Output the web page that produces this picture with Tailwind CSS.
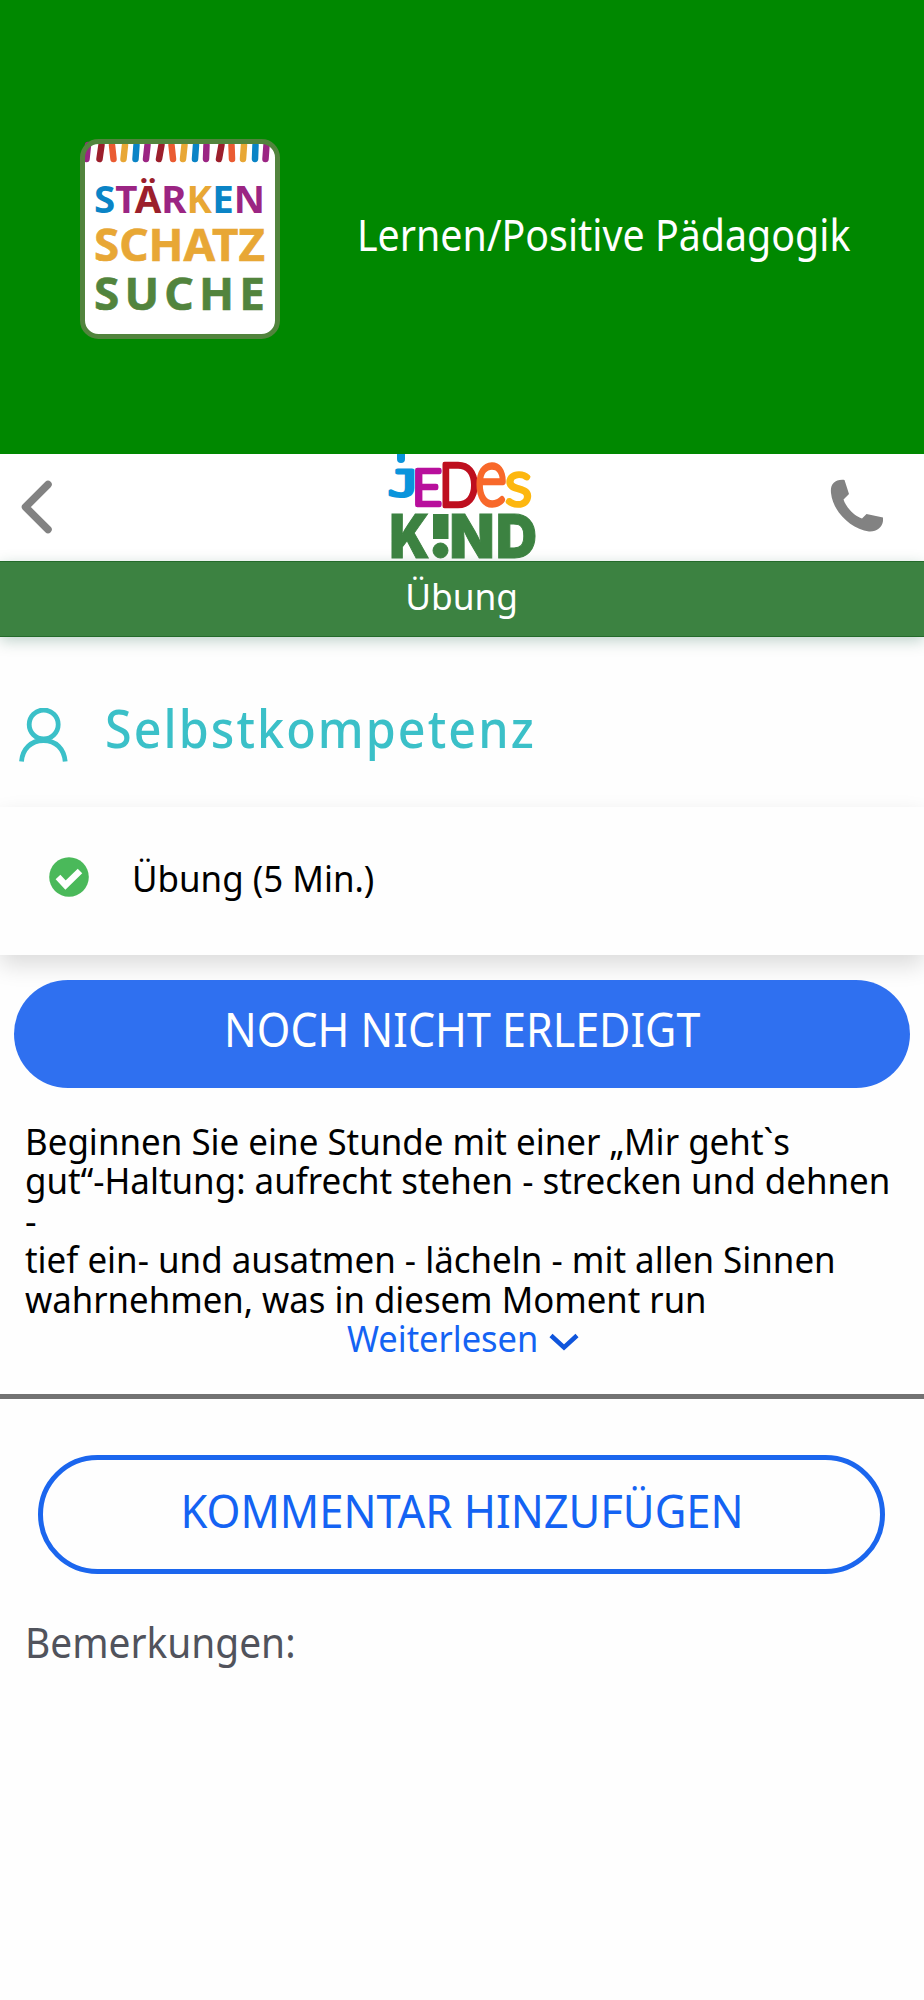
<!DOCTYPE html>
<html lang="de">
<head>
<meta charset="utf-8">
<title>Übung</title>
<script src="https://cdn.jsdelivr.net/npm/@tailwindcss/browser@4"></script>
</head>
<body class="w-[924px] h-[2000px] bg-[#fefefe] overflow-hidden font-['Noto_Sans',sans-serif] text-black">
<header class="h-[454px] bg-[#008800] flex items-start pt-[139px] pl-[80px]">
  <svg class="w-[200px] h-[200px] shrink-0" viewBox="0 0 200 200">
    <rect x="2.5" y="2.5" width="195" height="195" rx="16" fill="#fff"/>
    <g stroke-width="6.500" stroke-linecap="round" fill="none">
      <path stroke="#9b2583" d="M8 6L6.500 20M67.500 6L66 20M126.500 6L126 20M186.500 6L185.500 20"/>
      <path stroke="#9c1f2c" d="M21.500 6L19.500 20M81.500 6L79 20M141.500 6L139 20"/>
      <path stroke="#ea5b32" d="M32 6L33.500 20M91.500 6L93 20M151.500 6L152 20"/>
      <path stroke="#e8a735" d="M45 6L43.500 20M104.500 6L103 20M164 6L163 20"/>
      <path stroke="#0a84c6" d="M56.500 6L55.500 20M116 6L115 20M175.500 6L175 20"/>
    </g>
    <rect x="2.500" y="2.500" width="195" height="195" rx="16" fill="none" stroke="#52843d" stroke-width="5"/>
    <g font-family="Noto Sans, sans-serif" font-weight="700">
      <text x="14" y="73.500" font-size="38" textLength="171" lengthAdjust="spacingAndGlyphs"><tspan fill="#0a84c6">S</tspan><tspan fill="#9b2583">T</tspan><tspan fill="#9c1f2c">Ä</tspan><tspan fill="#9b2583">R</tspan><tspan fill="#e8a735">K</tspan><tspan fill="#0a84c6">E</tspan><tspan fill="#9b2583">N</tspan></text>
      <text x="14" y="122" font-size="44.500" fill="#e8a735" stroke="#e8a735" stroke-width="0.600" textLength="171" lengthAdjust="spacingAndGlyphs">SCHATZ</text>
      <text x="14" y="171" font-size="44.500" fill="#52843d" stroke="#52843d" stroke-width="0.600" letter-spacing="5" textLength="176" lengthAdjust="spacingAndGlyphs">SUCHE</text>
    </g>
  </svg>
  <h1 class="ml-[77px] mt-[66px] text-[43px] leading-[60px] text-white whitespace-nowrap"><span class="inline-block origin-left scale-x-[0.915]">Lernen/Positive Pädagogik</span></h1>
</header>
<nav class="h-[107px] bg-white flex items-center">
  <svg class="w-[36px] h-[56px] ml-[19px] -mt-[2px]" viewBox="0 0 36 56" fill="none" stroke="#828282" stroke-width="7.500" stroke-linecap="round" stroke-linejoin="round"><path d="M29 5.500L6.500 28L29 50.500"/></svg>
  <svg class="w-[180px] h-[107px] ml-[315px]" viewBox="0 9 180 107">
    <g stroke-linejoin="round" stroke-linecap="round" font-family="Lato, sans-serif" font-weight="300" stroke-width="4.500">
      <path d="M31 6V14" fill="none" stroke="#0a94dc" stroke-width="8"/>
      <text x="18" y="51" font-size="35" textLength="31" lengthAdjust="spacingAndGlyphs" font-family="DejaVu Sans Mono, monospace" fill="#0a94dc" stroke="#0a94dc" stroke-width="3">J</text>
      <text x="42" y="59.500" font-size="50" textLength="30" lengthAdjust="spacingAndGlyphs" fill="#b80f9c" stroke="#b80f9c">E</text>
      <text x="69" y="60.500" font-size="59" textLength="40" lengthAdjust="spacingAndGlyphs" fill="#be0f1e" stroke="#be0f1e">D</text>
      <text x="105" y="60" font-size="80" textLength="32" lengthAdjust="spacingAndGlyphs" fill="#f8682a" stroke="#f8682a">e</text>
      <text x="135" y="60" font-size="64" textLength="27" lengthAdjust="spacingAndGlyphs" fill="#fdb70f" stroke="#fdb70f">s</text>
    </g>
    <g fill="#3c8241" stroke="#3c8241" stroke-width="1" font-family="Inter, sans-serif" font-weight="900" font-size="60">
      <text x="19.500" y="113" textLength="40" lengthAdjust="spacingAndGlyphs">K</text>
      <rect x="63.500" y="69.500" width="14.500" height="24"/><circle cx="70.500" cy="105.500" r="7.500"/>
      <text x="79.500" y="113" textLength="45" lengthAdjust="spacingAndGlyphs">N</text>
      <text x="126" y="113" textLength="41" lengthAdjust="spacingAndGlyphs">D</text>
    </g>
  </svg>
  <svg class="w-[56px] h-[56px] ml-[277px] -mt-[3px]" viewBox="0 0 56 56"><path fill="#828282" d="M4 15C3 6 8 1 17.500 2L22 16L16.500 21.500C19 29 27 38 35 40.500L39.500 36L56 39.500C57 48 51 54 42 53.500C24 51 6 34 4 15Z"/></svg>
</nav>
<div class="h-[76px] bg-[#3c8241] border-y border-[#246a2a] flex items-center justify-center text-[36px] leading-[70px] text-white pb-[5px] shadow-[0_4px_14px_rgba(0,80,50,0.25)]"><span class="inline-block scale-x-[0.98]">Übung</span></div>
<section class="h-[170px] flex items-start text-[#3bc0c8]">
  <svg class="w-[50px] h-[54px] ml-[19px] mt-[71px]" viewBox="0 0 50 54" fill="none" stroke="#3bc0c8" stroke-width="4.800"><circle cx="24.700" cy="16.500" r="14.500"/><path d="M2.500 53.500C3.500 41 12 32.500 24.500 32.500C37 32.500 45 41 46.200 53.500"/></svg>
  <h2 class="ml-[36px] mt-[54px] text-[52px] leading-[74px] font-medium tracking-[2.2px]"><span class="inline-block origin-left scale-x-[0.932]">Selbstkompetenz</span></h2>
</section>
<section class="h-[148px] bg-[#fefefe] flex items-center pl-[49px] shadow-[0_10px_22px_rgba(0,0,0,0.14)]">
  <svg class="w-[40px] h-[40px] -mt-[8px]" viewBox="0 0 40 40"><circle cx="20" cy="20" r="19.800" fill="#4ab95a"/><path d="M9 20L16.500 28L31 14" fill="none" stroke="#fff" stroke-width="6.500"/></svg>
  <p class="ml-[43px] -mt-[4px] text-[36px] leading-[50px]"><span class="inline-block origin-left scale-x-[0.97]">Übung (5 Min.)</span></p>
</section>
<button class="block relative mt-[25px] mx-[14px] w-[896px] h-[108px] rounded-full bg-[#2f70f0] text-white text-[47px] leading-[98px] pb-[10px]"><span class="inline-block scale-x-[0.915]">NOCH NICHT ERLEDIGT</span></button>
<section class="mt-[34px] pl-[25px] h-[277px] text-[36px] leading-[39.4px] border-b-[5px] border-[#737373] whitespace-nowrap">
  <p><span class="inline-block origin-left scale-x-[0.97]">Beginnen Sie eine Stunde mit einer „Mir geht`s</span></p>
  <p><span class="inline-block origin-left scale-x-[0.97]">gut“-Haltung: aufrecht stehen - strecken und dehnen</span></p>
  <p>-</p>
  <p><span class="inline-block origin-left scale-x-[0.97]">tief ein- und ausatmen - lächeln - mit allen Sinnen</span></p>
  <p><span class="inline-block origin-left scale-x-[0.965]">wahrnehmen, was in diesem Moment run</span></p>
  <p class="flex items-center pl-[322px] text-[#1463f3]"><span class="inline-block w-[202px] origin-left scale-x-[0.957]">Weiterlesen</span><svg class="w-[30px] h-[18px] mt-[7px]" viewBox="0 0 30 18" fill="none" stroke="#0f55dc" stroke-width="4.500"><path d="M2 2.500L15 14.500L28 2.500"/></svg></p>
</section>
<button class="block mt-[56px] mx-[38px] w-[847px] h-[119px] rounded-full border-[5px] border-[#1b66ee] text-[#1463f3] text-[46px] leading-[98px] pb-[10px]"><span class="inline-block scale-x-[0.945]">KOMMENTAR HINZUFÜGEN</span></button>
<p class="mt-[40px] pl-[25px] text-[41px] leading-[56px] text-[#51535c]"><span class="inline-block origin-left scale-x-[0.948]">Bemerkungen:</span></p>
</body>
</html>
